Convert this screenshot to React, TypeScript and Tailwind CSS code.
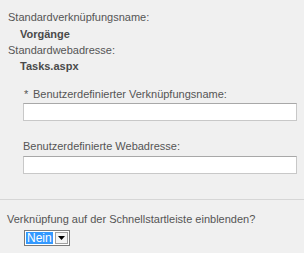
import React from 'react';

const font = { fontFamily: '"Liberation Sans", Arial, sans-serif' };

export default function App() {
  return (
    <div className="w-[304px] h-[253px] bg-[#f0f0f0] text-[11px] text-[#555555] overflow-hidden" style={font}>
      <div className="pt-[9px] pl-[8px] leading-[16px]">
        <div>Standardverknüpfungsname:</div>
        <div className="pl-[12px] font-bold text-[#4a4a4a] leading-[18px]">Vorgänge</div>
        <div className="leading-[15px]">Standardwebadresse:</div>
        <div className="pl-[12px] font-bold text-[#4a4a4a]">Tasks.aspx</div>
      </div>

      <div className="pl-[23px] pr-[7px] mt-[12px]">
        <div className="flex leading-[16px]">
          <span className="w-[10px] pl-[1px] text-[#555555]">*</span>
          <span>Benutzerdefinierter Verknüpfungsname:</span>
        </div>
        <input
          className="block mt-[1px] w-[274px] h-[18px] bg-white border border-[#c8c8c8] border-t-[#a8a8a8] outline-none"
          type="text"
        />
        <div className="mt-[17px] leading-[16px]">Benutzerdefinierte Webadresse:</div>
        <input
          className="block mt-[2px] w-[274px] h-[18px] bg-white border border-[#c8c8c8] border-t-[#a8a8a8] outline-none"
          type="text"
        />
      </div>

      <div className="mt-[25px] border-t border-[#d6d6d6]" />

      <div className="pl-[7px] pt-[11px] leading-[16px]">
        Verknüpfung auf der Schnellstartleiste einblenden?
      </div>
      <div className="pl-[24px] mt-[3px]">
        <div className="inline-flex items-center h-[16px] bg-white border border-[#7a7a7a]">
          <span className="ml-[1px] px-[1px] h-[12px] leading-[12px] bg-[#3399ff] text-white text-[12px]">Nein</span>
          <span className="ml-[2px] mr-[1px] w-[13px] h-[12px] flex items-center justify-center bg-[#f4f4f4] border border-[#a0a0a0]">
            <svg width="7" height="4" viewBox="0 0 7 4">
              <polygon points="0,0 7,0 3.5,4" fill="#000" />
            </svg>
          </span>
        </div>
      </div>
    </div>
  );
}
